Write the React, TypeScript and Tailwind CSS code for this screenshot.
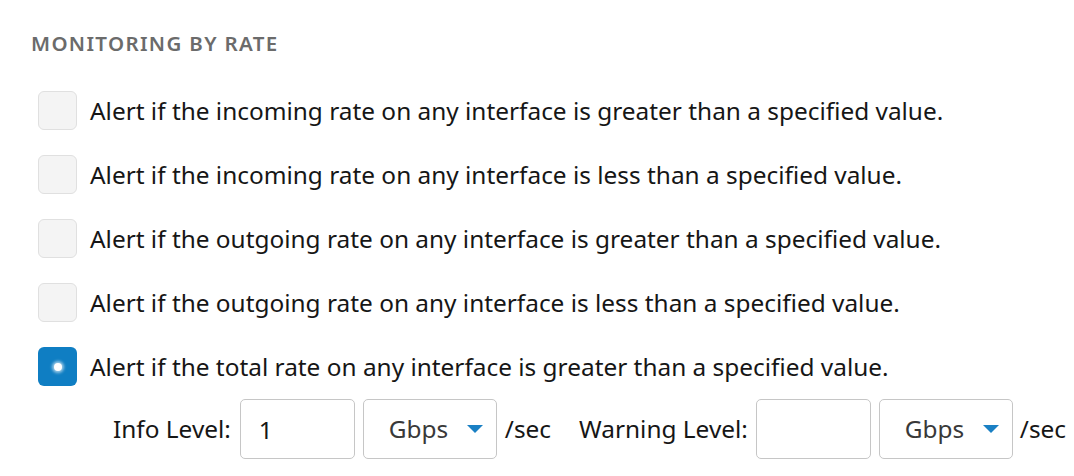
import { useState } from 'react'

const rules = [
  'Alert if the incoming rate on any interface is greater than a specified value.',
  'Alert if the incoming rate on any interface is less than a specified value.',
  'Alert if the outgoing rate on any interface is greater than a specified value.',
  'Alert if the outgoing rate on any interface is less than a specified value.',
  'Alert if the total rate on any interface is greater than a specified value.',
]

function Box({ checked, onClick }: { checked: boolean; onClick: () => void }) {
  return (
    <button
      onClick={onClick}
      className={`w-[39px] h-[39px] flex-shrink-0 rounded-[6px] flex items-center justify-center ${
        checked ? 'bg-[#0f7ec3]' : 'bg-[#f4f4f4] border border-[#e0e0e0]'
      }`}
    >
      {checked && <span className="w-[8px] h-[8px] rounded-full bg-white shadow-[0_0_3px_2px_rgba(255,255,255,0.6)]" />}
    </button>
  )
}

function UnitSelect() {
  return (
    <div className="w-[134px] h-[60px] border border-[#c6c6c6] rounded-[5px] flex items-center pl-[25px] pr-[12px] text-[#393939]">
      <span className="flex-1">Gbps</span>
      <svg width="16" height="8" viewBox="0 0 16 8" className="mr-[1px]">
        <path d="M0 0 H16 L8 8 Z" fill="#1a80c4" />
      </svg>
    </div>
  )
}

export default function App() {
  const [checked, setChecked] = useState([false, false, false, false, true])

  const toggle = (i: number) => setChecked((c) => c.map((v, j) => (j === i ? !v : v)))

  return (
    <div className="bg-white w-[1074px] h-[476px] pl-[31px] pt-[32px] text-[#161616] font-['Noto_Sans',sans-serif]">
      <h2 className="text-[20.5px] leading-[22px] font-semibold tracking-[0.065em] text-[#6b6b6b]">
        MONITORING BY RATE
      </h2>

      <div className="mt-[37px] flex flex-col gap-[25px] pl-[7px]">
        {rules.map((r, i) => (
          <div key={i} className="flex items-center gap-[13px]">
            <Box checked={checked[i]} onClick={() => toggle(i)} />
            <span className="text-[24.4px] leading-[39px]">{r}</span>
          </div>
        ))}
      </div>

      {/* threshold inputs */}
      <div className="mt-[13px] ml-[82px] flex items-center text-[24.4px]">
        <span>Info Level:</span>
        <input
          defaultValue="1"
          className="ml-[9px] w-[115px] h-[60px] border border-[#c6c6c6] rounded-[5px] px-[18px] outline-none"
        />
        <div className="ml-[8px]">
          <UnitSelect />
        </div>
        <span className="ml-[8px]">/sec</span>
        <span className="ml-[28px]">Warning Level:</span>
        <input className="ml-[8px] w-[115px] h-[60px] border border-[#c6c6c6] rounded-[5px] px-[18px] outline-none" />
        <div className="ml-[8px]">
          <UnitSelect />
        </div>
        <span className="ml-[7px]">/sec</span>
      </div>
    </div>
  )
}
